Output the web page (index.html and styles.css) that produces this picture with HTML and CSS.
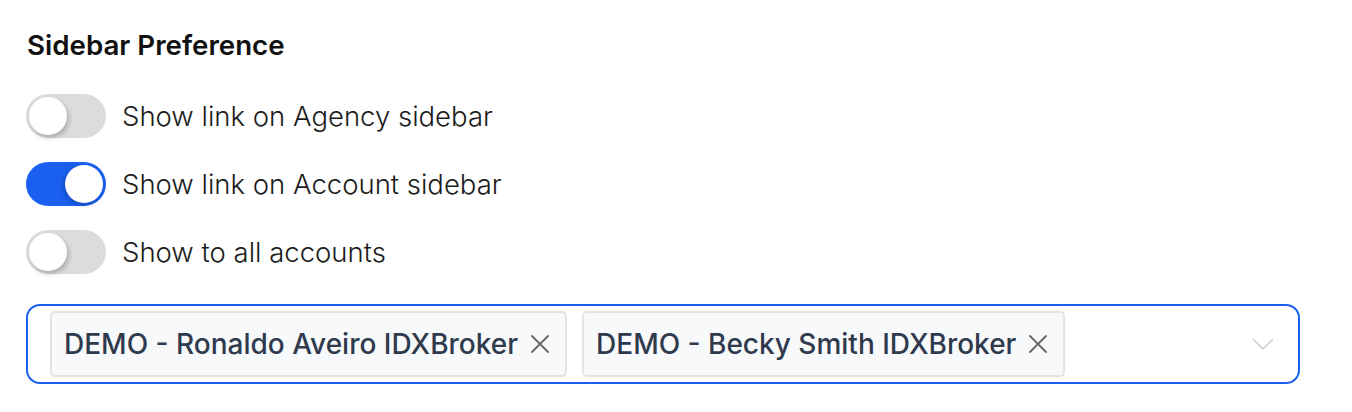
FILE: index.html
```html
<!DOCTYPE html>
<html lang="en">
<head>
<meta charset="utf-8">
<title>Sidebar Preference</title>
<link rel="stylesheet" href="styles.css">
</head>
<body>
<section class="panel">
  <h2 class="title">Sidebar Preference</h2>
  <div class="toggles">
    <label class="row">
      <span class="switch"><span class="knob"></span></span>
      <span class="label">Show link on Agency sidebar</span>
    </label>
    <label class="row">
      <span class="switch on"><span class="knob"></span></span>
      <span class="label">Show link on Account sidebar</span>
    </label>
    <label class="row">
      <span class="switch"><span class="knob"></span></span>
      <span class="label">Show to all accounts</span>
    </label>
  </div>
  <div class="select">
    <div class="chips">
      <span class="chip">DEMO - Ronaldo Aveiro IDXBroker
        <svg class="x" viewBox="0 0 20 20" width="20" height="20"><path d="M2 2L18 18M18 2L2 18" stroke="currentColor" stroke-width="1.8" fill="none" stroke-linecap="round"/></svg>
      </span>
      <span class="chip">DEMO - Becky Smith IDXBroker
        <svg class="x" viewBox="0 0 20 20" width="20" height="20"><path d="M2 2L18 18M18 2L2 18" stroke="currentColor" stroke-width="1.8" fill="none" stroke-linecap="round"/></svg>
      </span>
    </div>
    <svg class="chev" viewBox="0 0 22 12" width="22" height="12"><path d="M1 1L11 11L21 1" stroke="currentColor" stroke-width="1.4" fill="none"/></svg>
  </div>
</section>
</body>
</html>
```

FILE: styles.css
```css
* { box-sizing: border-box; }
body {
  margin: 0;
  background: #fff;
  font-family: Inter, "Noto Sans", sans-serif;
}
.panel {
  padding: 28px 52px 0 26px;
}
.title {
  margin: 0 0 0 1px;
  font-size: 27.7px;
  line-height: 34px;
  font-weight: 600;
  color: #111;
}
.toggles {
  margin-top: 32px;
  display: flex;
  flex-direction: column;
  gap: 24px;
}
.row {
  display: flex;
  align-items: center;
  gap: 16px;
}
.switch {
  position: relative;
  width: 80px;
  height: 44px;
  border-radius: 22px;
  background: #dcdcdc;
  flex: none;
}
.switch.on { background: #1a5ff0; }
.knob {
  position: absolute;
  top: 3px;
  left: 3px;
  width: 38px;
  height: 38px;
  border-radius: 50%;
  background: #fff;
  box-shadow: 2px 3px 5px rgba(0,0,0,0.22);
}
.switch.on .knob { left: 39px; box-shadow: -2px 2px 5px rgba(0,0,0,0.2); }
.label {
  font-size: 27.5px;
  font-weight: 300;
  color: #1c1c1c;
  line-height: 34px;
}
.select {
  margin-top: 30px;
  height: 80px;
  border: 2px solid #1a5ff0;
  border-radius: 14px;
  display: flex;
  align-items: center;
  padding: 0 24px 0 22px;
}
.chips {
  flex: 1;
  display: flex;
  gap: 15px;
}
.chip {
  display: flex;
  align-items: center;
  gap: 12px;
  height: 66px;
  padding: 0 15px 0 12px;
  background: #f8f9fb;
  border: 2px solid #e2e4e8;
  border-radius: 5px;
  font-size: 28px;
  font-weight: 500;
  color: #2f3a4d;
}
.x { color: #666; width: 20px; height: 20px; }
.chev { color: #c9c9c9; }
```
